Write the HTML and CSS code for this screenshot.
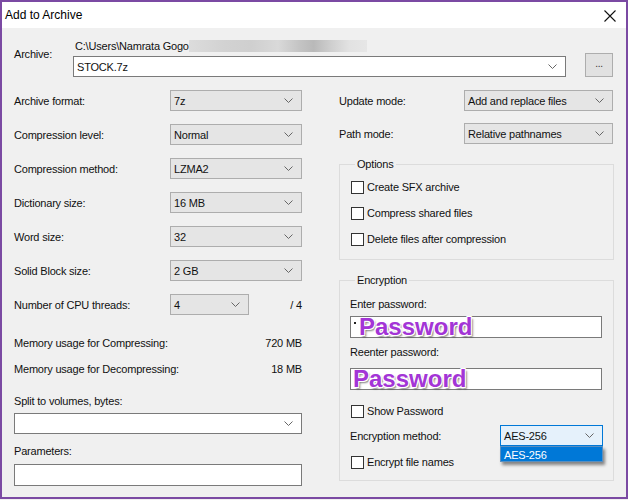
FILE: index.html
```html
<!DOCTYPE html>
<html>
<head>
<meta charset="utf-8">
<link rel="stylesheet" href="styles.css">
</head>
<body>
<div class="window">
  <div class="titlebar">
    <span class="title">Add to Archive</span>
    <svg class="close" width="12" height="12" viewBox="0 0 12 12"><path d="M0.5 0.5 L11.5 11.5 M11.5 0.5 L0.5 11.5" stroke="#111" stroke-width="1.1" fill="none"/></svg>
  </div>
  <div class="body">
    <div class="archive-row">
      <div class="archive-label">Archive:</div>
      <div class="archive-main">
        <div class="path"><span>C:\Users\Namrata Gogo</span><span class="blur"></span></div>
        <div class="combo white wide"><span class="val">STOCK.7z</span><svg class="chev" width="9" height="5" viewBox="0 0 9 5"><path d="M0.5 0.5 L4.5 4.5 L8.5 0.5" stroke="#666" fill="none"/></svg></div>
      </div>
      <div class="browse">...</div>
    </div>

    <div class="columns">
      <div class="left">
        <div class="row"><span class="lbl">Archive format:</span><div class="combo"><span class="val">7z</span><svg class="chev" width="9" height="5" viewBox="0 0 9 5"><path d="M0.5 0.5 L4.5 4.5 L8.5 0.5" stroke="#666" fill="none"/></svg></div></div>
        <div class="row"><span class="lbl">Compression level:</span><div class="combo"><span class="val">Normal</span><svg class="chev" width="9" height="5" viewBox="0 0 9 5"><path d="M0.5 0.5 L4.5 4.5 L8.5 0.5" stroke="#666" fill="none"/></svg></div></div>
        <div class="row"><span class="lbl">Compression method:</span><div class="combo"><span class="val">LZMA2</span><svg class="chev" width="9" height="5" viewBox="0 0 9 5"><path d="M0.5 0.5 L4.5 4.5 L8.5 0.5" stroke="#666" fill="none"/></svg></div></div>
        <div class="row"><span class="lbl">Dictionary size:</span><div class="combo"><span class="val">16 MB</span><svg class="chev" width="9" height="5" viewBox="0 0 9 5"><path d="M0.5 0.5 L4.5 4.5 L8.5 0.5" stroke="#666" fill="none"/></svg></div></div>
        <div class="row"><span class="lbl">Word size:</span><div class="combo"><span class="val">32</span><svg class="chev" width="9" height="5" viewBox="0 0 9 5"><path d="M0.5 0.5 L4.5 4.5 L8.5 0.5" stroke="#666" fill="none"/></svg></div></div>
        <div class="row"><span class="lbl">Solid Block size:</span><div class="combo"><span class="val">2 GB</span><svg class="chev" width="9" height="5" viewBox="0 0 9 5"><path d="M0.5 0.5 L4.5 4.5 L8.5 0.5" stroke="#666" fill="none"/></svg></div></div>
        <div class="row"><span class="lbl">Number of CPU threads:</span><div class="combo short"><span class="val">4</span><svg class="chev" width="9" height="5" viewBox="0 0 9 5"><path d="M0.5 0.5 L4.5 4.5 L8.5 0.5" stroke="#666" fill="none"/></svg></div><span class="right">/ 4</span></div>

        <div class="mem first"><span>Memory usage for Compressing:</span><span>720 MB</span></div>
        <div class="mem"><span>Memory usage for Decompressing:</span><span>18 MB</span></div>

        <div class="plain split-lbl">Split to volumes, bytes:</div>
        <div class="combo white full"><span class="val"></span><svg class="chev" width="9" height="5" viewBox="0 0 9 5"><path d="M0.5 0.5 L4.5 4.5 L8.5 0.5" stroke="#666" fill="none"/></svg></div>
        <div class="plain param-lbl">Parameters:</div>
        <div class="textbox full"></div>
      </div>

      <div class="right-col">
        <div class="rrow"><span class="rlbl">Update mode:</span><div class="combo rcombo"><span class="val">Add and replace files</span><svg class="chev" width="9" height="5" viewBox="0 0 9 5"><path d="M0.5 0.5 L4.5 4.5 L8.5 0.5" stroke="#666" fill="none"/></svg></div></div>
        <div class="rrow second"><span class="rlbl">Path mode:</span><div class="combo rcombo"><span class="val">Relative pathnames</span><svg class="chev" width="9" height="5" viewBox="0 0 9 5"><path d="M0.5 0.5 L4.5 4.5 L8.5 0.5" stroke="#666" fill="none"/></svg></div></div>

        <fieldset class="group options">
          <legend>Options</legend>
          <div class="check"><span class="box"></span><span>Create SFX archive</span></div>
          <div class="check"><span class="box"></span><span>Compress shared files</span></div>
          <div class="check"><span class="box"></span><span>Delete files after compression</span></div>
        </fieldset>

        <fieldset class="group encryption">
          <legend>Encryption</legend>
          <div class="plain enc-lbl1">Enter password:</div>
          <div class="pwbox"><span class="dot"></span><span class="pw">Password</span></div>
          <div class="plain enc-lbl2">Reenter password:</div>
          <div class="pwbox second"><span class="pw">Password</span></div>
          <div class="check show"><span class="box"></span><span>Show Password</span></div>
          <div class="method-row">
            <span class="mlbl">Encryption method:</span>
            <div class="combo mcombo"><span class="val">AES-256</span><svg class="chev" width="9" height="5" viewBox="0 0 9 5"><path d="M0.5 0.5 L4.5 4.5 L8.5 0.5" stroke="#666" fill="none"/></svg>
              <div class="dropdown">AES-256</div>
            </div>
          </div>
          <div class="check encnames"><span class="box"></span><span>Encrypt file names</span></div>
        </fieldset>
      </div>
    </div>
  </div>
</div>
</body>
</html>
```

FILE: styles.css
```css
* { box-sizing: border-box; }
html, body { margin: 0; padding: 0; background: #f0f0f0; }
body {
  font-family: "Liberation Sans", Arial, sans-serif;
  font-size: 11px;
  letter-spacing: -0.2px;
  color: #111;
}
.window {
  width: 628px;
  height: 499px;
  border: 2px solid #7b4aa3;
  background: #f0f0f0;
  overflow: hidden;
}
.titlebar {
  height: 26px;
  background: #fff;
  display: flex;
  align-items: center;
  justify-content: space-between;
  padding: 0 10px 0 3px;
}
.title { font-size: 12px; letter-spacing: 0; color: #000; }
.close { margin-top: 1px; }

.body { padding: 11px 12px 0 12px; }

.archive-row { display: flex; align-items: flex-start; }
.archive-label { width: 59px; padding-top: 8px; line-height: 14px; }
.archive-main { width: 493px; }
.path { display: flex; align-items: center; height: 14px; line-height: 14px; padding-left: 2px; }
.blur {
  display: inline-block;
  width: 178px;
  height: 12px;
  background: linear-gradient(90deg, #dcdcdc 0, #d2d2d2 20%, #cfcfcf 35%, #d9d9d9 50%, #c4c4c4 62%, #b9b9b9 70%, #cfcfcf 80%, #e2e2e2 90%, #e6e6e6 100%);
}
.wide { margin-top: 3px; }
.browse {
  margin-left: 19px;
  margin-top: 14px;
  width: 28px;
  height: 24px;
  background: #e1e1e1;
  border: 1px solid #adadad;
  text-align: center;
  line-height: 20px;
  font-size: 10px;
  color: #333;
}

.combo {
  height: 21px;
  border: 1px solid #adadad;
  background: #e5e5e5;
  display: flex;
  align-items: center;
  padding: 0 8px 0 3px;
  position: relative;
}
.combo.white { background: #fff; border-color: #7a7a7a; }
.combo .val { flex: 1; white-space: nowrap; overflow: visible; }
.chev { flex: none; }

.columns { display: flex; margin-top: 13px; }
.left { width: 288px; }
.right-col { width: 275px; margin-left: 37px; }

.row { display: flex; align-items: center; height: 21px; margin-bottom: 13px; }
.row .lbl { width: 156px; }
.row .combo { width: 132px; }
.row .combo.short { width: 79px; }
.row .right { flex: 1; text-align: right; }
.row:nth-child(7) { margin-bottom: 0; }

.mem { display: flex; justify-content: space-between; height: 26px; align-items: center; }
.mem.first { margin-top: 15px; }
.plain { line-height: 14px; }
.split-lbl { margin-top: 12px; }
.full { width: 288px; }
.split-lbl + .combo { margin-top: 5px; }
.param-lbl { margin-top: 10px; }
.textbox { margin-top: 6px; height: 22px; background: #fff; border: 1px solid #7a7a7a; }

.rrow { display: flex; align-items: center; height: 21px; }
.rrow.second { margin-top: 12px; }
.rlbl { width: 125px; }
.rcombo { width: 149px; }

.group {
  margin: 0;
  border: 1px solid #dcdcdc;
  width: 275px;
  padding: 0 10px 0 10px;
}
.group legend {
  padding: 0 2px;
  margin-left: 5px;
  line-height: 14px;
}
.options { margin-top: 13px; padding-top: 3px; padding-bottom: 7px; }
.check { display: flex; align-items: center; height: 26px; }
.box {
  width: 13px;
  height: 13px;
  border: 1px solid #333;
  background: #fff;
  margin-left: 1px;
  margin-right: 3px;
  flex: none;
}

.encryption { margin-top: 13px; padding-bottom: 5px; }
.enc-lbl1 { margin-top: 10px; }
.pwbox {
  margin-top: 5px;
  height: 22px;
  width: 252px;
  background: #fff;
  border: 1px solid #7a7a7a;
  display: flex;
  align-items: center;
  padding-left: 2px;
  overflow: visible;
}
.pwbox.second { margin-top: 9px; }
.enc-lbl2 { margin-top: 7px; }
.dot { width: 2px; height: 2px; background: #222; margin: 0 3px 8px 1px; }
.pw {
  font-family: "Liberation Sans", Arial, sans-serif;
  font-weight: bold;
  font-size: 24px;
  letter-spacing: 0;
  line-height: 20px;
  color: #a335d6;
  text-shadow: -1px -1px 0 #fff, 1px -1px 0 #fff, -1px 1px 0 #fff, 1px 1px 0 #fff, 2px 2px 2px rgba(0,0,0,0.5);
}
.check.show { margin-top: 8px; }
.method-row { display: flex; align-items: center; height: 21px; margin-top: 1px; }
.mlbl { width: 150px; }
.mcombo {
  width: 103px;
  background: #e5f1fb;
  border-color: #0078d7;
}
.dropdown {
  position: absolute;
  left: -1px;
  top: 20px;
  width: 103px;
  height: 16px;
  background: #0078d7;
  color: #fff;
  line-height: 16px;
  padding-left: 3px;
  box-shadow: 2px 3px 3px rgba(0,0,0,0.45);
  border: 1px solid #5a8fc0;
}
.check.encnames { margin-top: 3px; }
```
